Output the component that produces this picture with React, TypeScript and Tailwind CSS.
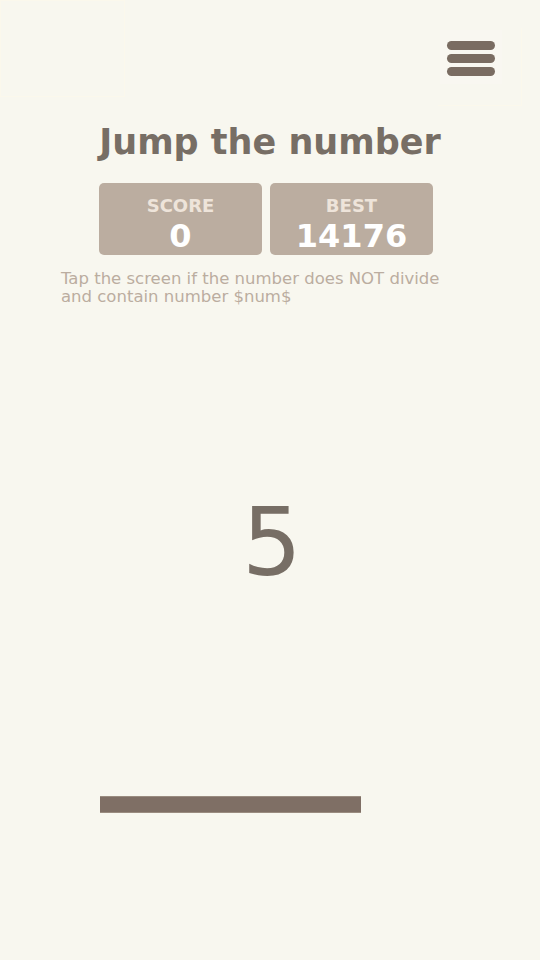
export default function App() {
  return (
    <div
      className="relative w-[540px] h-[960px] bg-[#f8f7ef] overflow-hidden text-[#776e65]"
      style={{ fontFamily: '"DejaVu Sans", Verdana, sans-serif' }}
    >
      {/* Top bar */}
      <div className="flex justify-between items-start h-[110px]">
        <div className="w-[125px] h-[97px] border border-[#fbf8ec]" />
        <div className="mt-[28px] mr-[18px] w-[84px] h-[78px] border-r border-b border-[#fbf8ec] pt-[2px] pl-[2px]">
          <button className="w-[62px] h-[54px] flex flex-col items-center pt-[11px] gap-[4px] bg-[#f9f7f1]">
            <span className="w-[48px] h-[9px] rounded-full bg-[#7a6c62]" />
            <span className="w-[48px] h-[9px] rounded-full bg-[#7a6c62]" />
            <span className="w-[48px] h-[9px] rounded-full bg-[#7a6c62]" />
          </button>
        </div>
      </div>

      {/* Header */}
      <h1 className="text-center text-[35px] font-bold leading-none mt-[15px]">
        Jump the number
      </h1>

      <div className="flex gap-[8px] ml-[99px] mt-[23px]">
        <div className="w-[163px] h-[72px] rounded-[5px] bg-[#bbada0] flex flex-col items-center pt-[14px]">
          <span className="text-[18px] font-bold leading-none text-[#eee4da]">SCORE</span>
          <span className="text-[32px] font-bold leading-none text-white mt-[5px]">0</span>
        </div>
        <div className="w-[163px] h-[72px] rounded-[5px] bg-[#bbada0] flex flex-col items-center pt-[14px]">
          <span className="text-[18px] font-bold leading-none text-[#eee4da]">BEST</span>
          <span className="text-[32px] font-bold leading-none text-white mt-[5px]">14176</span>
        </div>
      </div>

      <p className="ml-[61px] w-[400px] mt-[15px] text-[16.5px] leading-[18px] text-[#bbada0]">
        Tap the screen if the number does NOT divide and contain number $num$
      </p>

      {/* Number */}
      <div className="flex justify-center mt-[190px] pl-[4px]">
        <span className="text-[94px] leading-none">5</span>
      </div>

      {/* Bar */}
      <div className="ml-[100px] mt-[206px] w-[261px] h-[17px] bg-[#7f6f65] border-y border-[#9a8c80]" />
    </div>
  );
}
